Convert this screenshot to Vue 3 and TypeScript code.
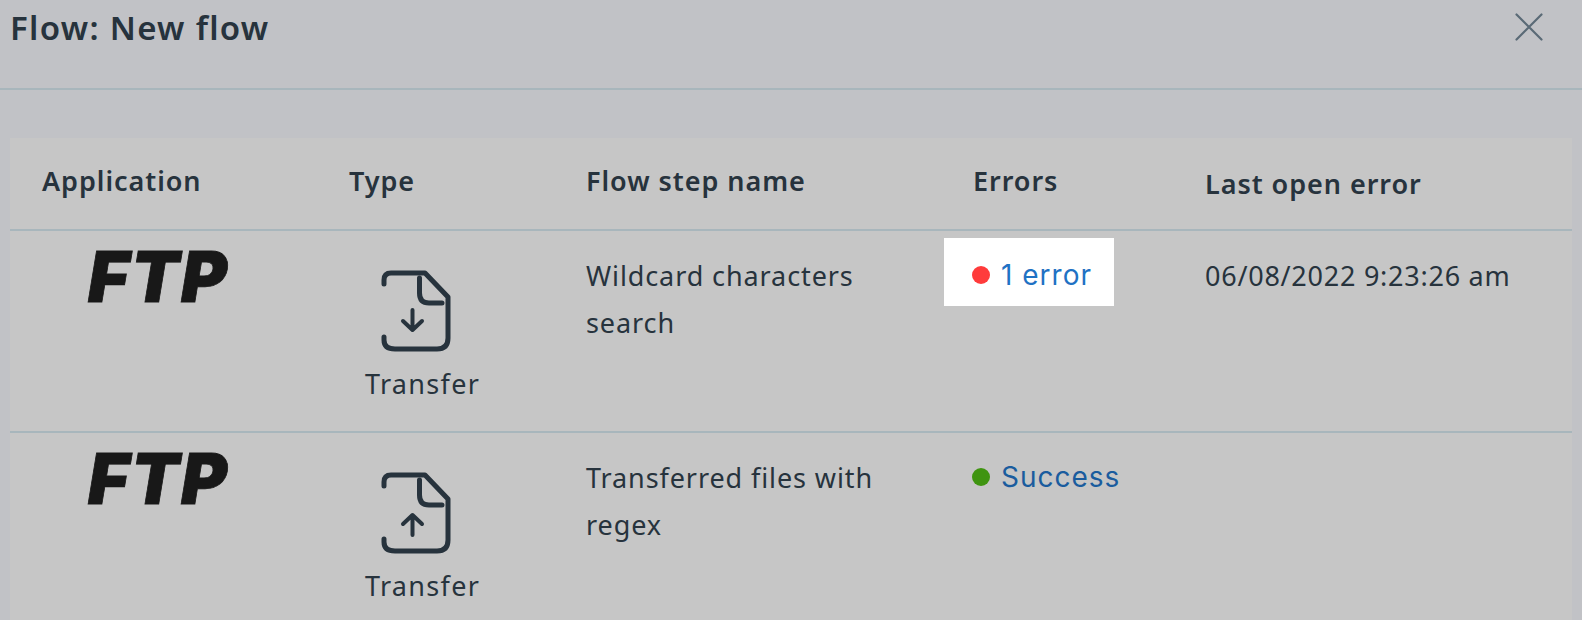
<template>
  <div class="modal">
    <header class="modal-head">
      <h2 class="title">Flow: New flow</h2>
      <button class="close" title="Close">
        <svg width="30" height="30" viewBox="0 0 30 30" fill="none">
          <path d="M2.5 2.5 L27.5 27.5 M27.5 2.5 L2.5 27.5" stroke="#5a6a76" stroke-width="2.2" stroke-linecap="round" />
        </svg>
      </button>
    </header>
    <section class="panel">
      <div class="row head-row">
        <div v-for="col in columns" :key="col" class="cell th">{{ col }}</div>
      </div>
      <div v-for="step in steps" :key="step.name" class="row body-row">
        <div class="cell app"><span class="ftp">FTP</span></div>
        <div class="cell type">
          <svg class="file" width="72" height="82" viewBox="0 0 72 82" fill="none">
            <path d="M4 14 V10 Q4 3 11 3 H45 L68 27 V68 Q68 79 57 79 H15 Q4 79 4 70 V67" />
            <path d="M39.500 8 V23 Q39.500 33 49 33 H62" />
            <path v-if="step.dir === 'down'" class="arrow" d="M32.500 40 V60 M23 51 L32.500 60 L42 51" />
            <path v-else class="arrow" d="M32.500 63 V43 M23 52 L32.500 43 L42 52" />
          </svg>
          <span>Transfer</span>
        </div>
        <div class="cell name">{{ step.name }}</div>
        <div class="cell status">
          <span class="status-box" :class="{ hot: step.hot }">
            <i class="dot" :style="{ background: step.dot }"></i>
            <a class="link" :style="{ color: step.link }">{{ step.status }}</a>
          </span>
        </div>
        <div class="cell when">{{ step.when }}</div>
      </div>
    </section>
  </div>
</template>

<script setup lang="ts">
interface FlowStep {
  name: string
  dir: 'down' | 'up'
  status: string
  dot: string
  link: string
  hot: boolean
  when: string
}

const columns = ['Application', 'Type', 'Flow step name', 'Errors', 'Last open error']

const steps: FlowStep[] = [
  {
    name: 'Wildcard characters search',
    dir: 'down',
    status: '1 error',
    dot: '#ff3b3b',
    link: '#1f72c4',
    hot: true,
    when: '06/08/2022 9:23:26 am'
  },
  {
    name: 'Transferred files with regex',
    dir: 'up',
    status: 'Success',
    dot: '#3f9410',
    link: '#1a5c9e',
    hot: false,
    when: ''
  }
]
</script>

<style scoped>
.modal {
  width: 1582px;
  height: 620px;
  overflow: hidden;
  background: #c1c2c6;
  color: #27333d;
  font-family: "Noto Sans", "Open Sans", sans-serif;
}

.modal-head {
  display: flex;
  justify-content: space-between;
  height: 88px;
  padding: 0 38px 0 10px;
  border-bottom: 2px solid #a8b6bc;
}

.title {
  margin: 6px 0 0;
  font-size: 33px;
  line-height: 44px;
  font-weight: 600;
  letter-spacing: 1.3px;
}

.close {
  align-self: flex-start;
  margin-top: 12px;
  padding: 0;
  border: none;
  background: none;
}

.panel {
  margin: 48px 10px 0;
  background: #c6c6c6;
}

.row {
  display: grid;
  grid-template-columns: 307px 237px 387px 232px 1fr;
  padding-left: 32px;
}

.head-row {
  height: 93px;
  padding-bottom: 6px;
  box-sizing: border-box;
  align-items: center;
  border-bottom: 2px solid #a8b6bc;
}

.th {
  font-size: 27px;
  font-weight: 600;
  letter-spacing: 0.95px;
}

.th:last-child {
  margin-top: 6px;
}

.body-row {
  height: 200px;
  border-bottom: 2px solid #a8b6bc;
  font-size: 27px;
  line-height: 47px;
  letter-spacing: 0.9px;
}

.cell {
  white-space: nowrap;
}

.name {
  white-space: normal;
  width: 300px;
  padding-top: 21px;
}

.app {
  padding: 12px 0 0 46px;
}

.ftp {
  display: block;
  font-family: Inter, "Liberation Sans", sans-serif;
  font-size: 70px;
  font-weight: 900;
  font-style: italic;
  line-height: 68px;
  letter-spacing: 2px;
  color: #181818;
  -webkit-text-stroke: 0.8px #181818;
}

.type {
  display: flex;
  flex-direction: column;
  align-items: flex-start;
  padding-top: 39px;
}

.file {
  margin: 0 0 0 31px;
}

.file path {
  stroke: #27333d;
  stroke-width: 5;
  stroke-linecap: round;
  stroke-linejoin: round;
}

.file path.arrow {
  stroke-width: 4;
}

.type span {
  margin-top: 12px;
  line-height: 40px;
  margin-left: 16px;
  letter-spacing: 1.3px;
}

.status {
  margin-left: -29px;
  padding-top: 7px;
}

.status-box {
  display: inline-flex;
  align-items: center;
  gap: 11px;
  height: 68px;
  box-sizing: border-box;
  padding: 6px 22px 0 28px;
}

.status-box.hot {
  background: #fff;
}

.dot {
  width: 18px;
  height: 18px;
  border-radius: 50%;
}

.link {
  font-family: Inter, "Noto Sans", sans-serif;
  font-size: 28px;
  letter-spacing: 1px;
}

.when {
  padding-top: 21px;
  letter-spacing: 0.75px;
}
</style>

<style>
html,
body {
  overflow: hidden;
}
</style>
